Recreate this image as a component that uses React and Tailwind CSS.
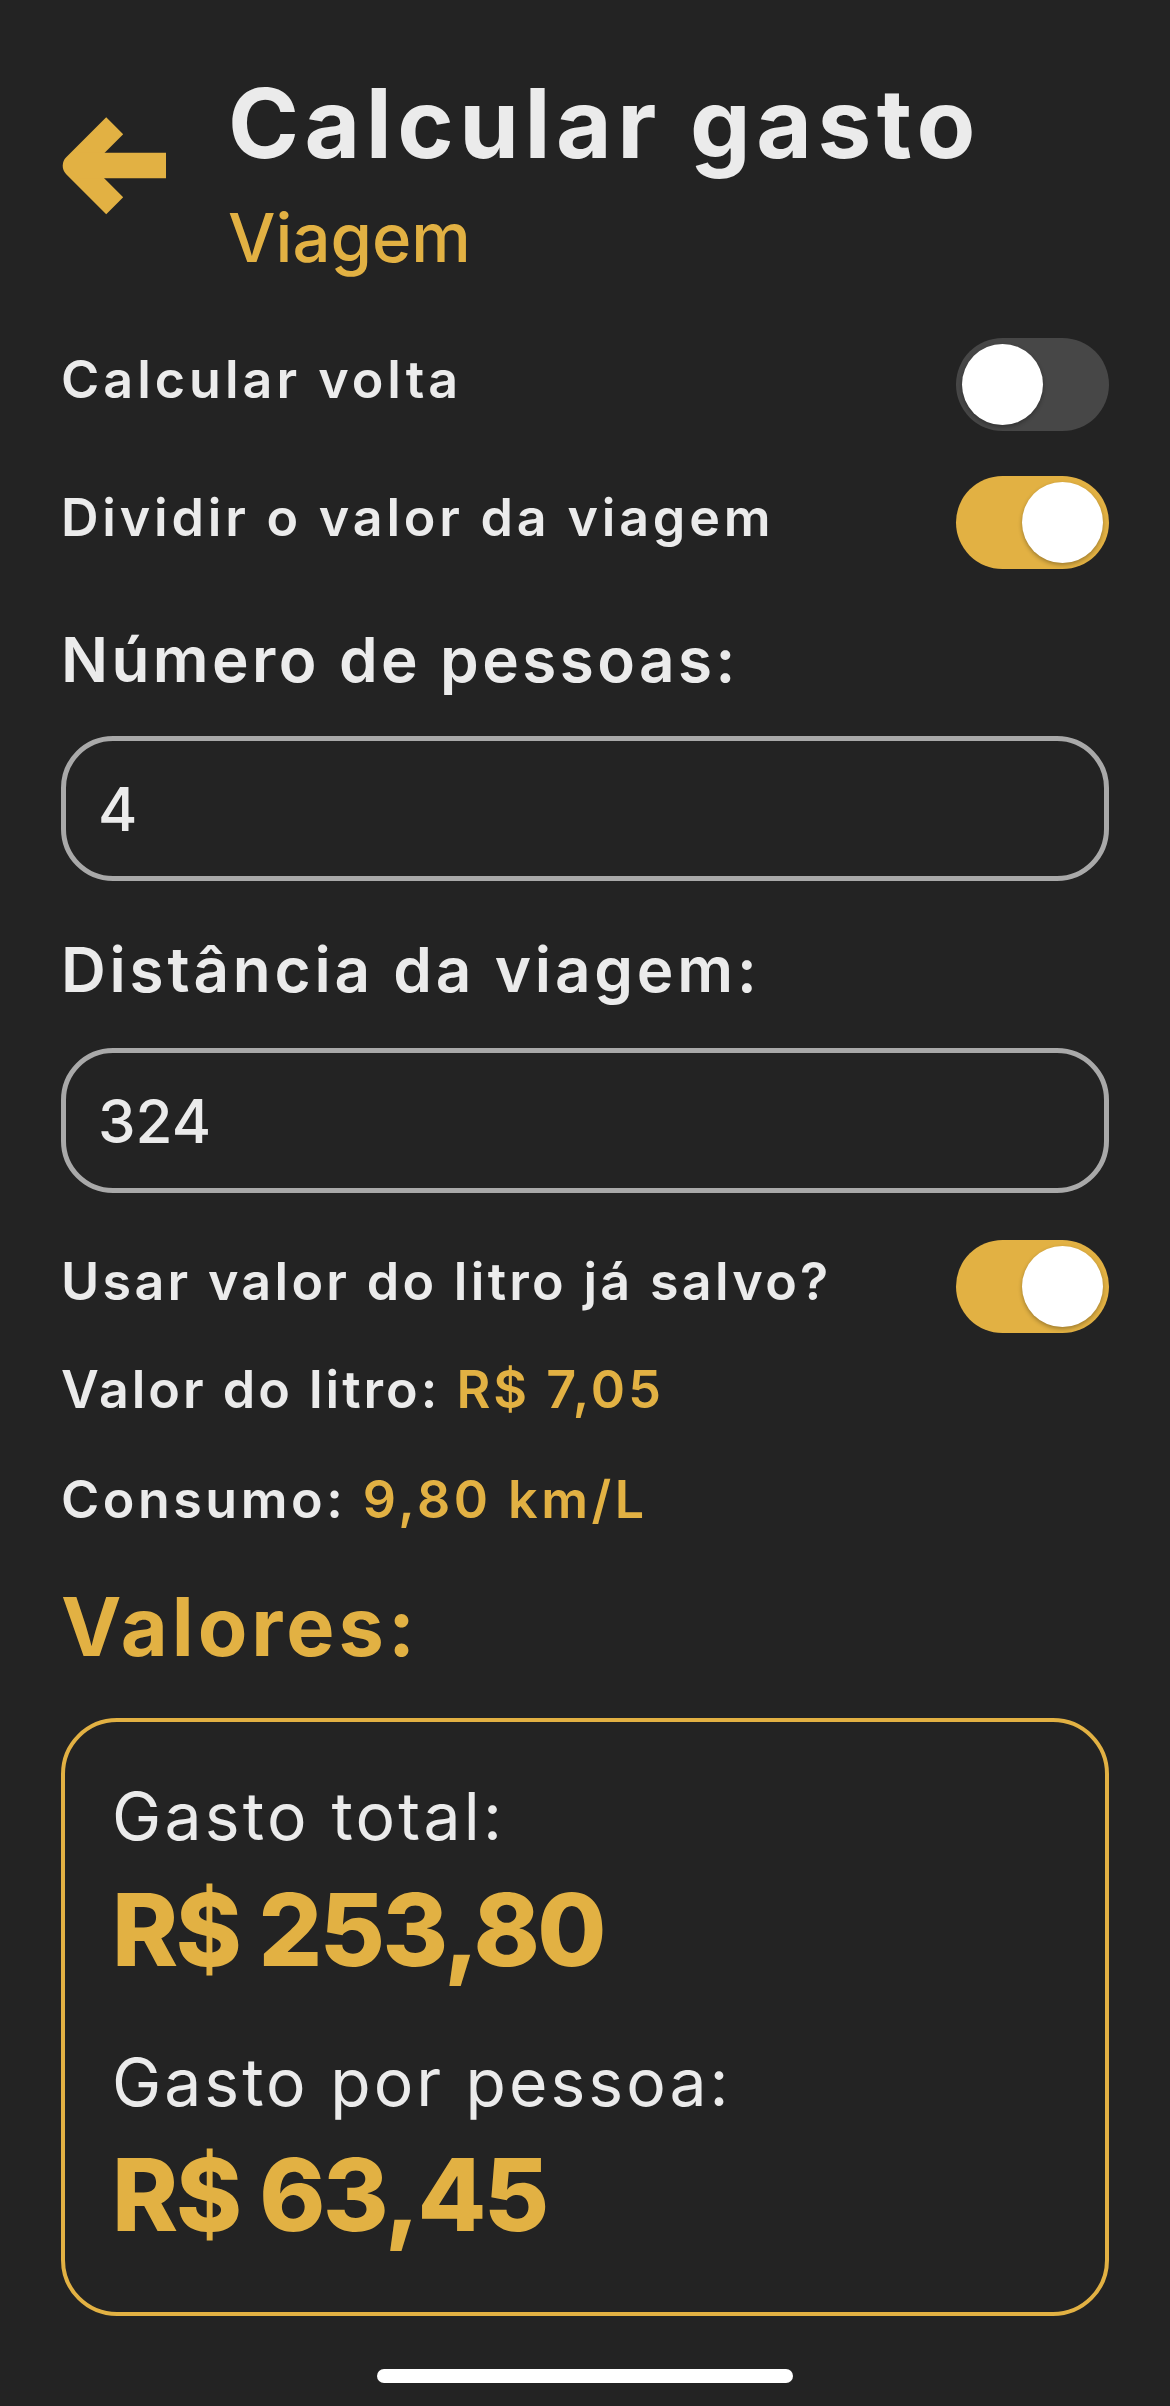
import React, { useState } from "react";

const FONT = { fontFamily: "Inter, 'Noto Sans', sans-serif" };

// ==================== TOGGLE ====================
function Toggle({ on, onChange }) {
  return (
    <button
      onClick={() => onChange(!on)}
      className={`flex h-[93px] w-[153px] shrink-0 items-center rounded-full p-[6px] ${
        on ? "justify-end bg-[#e2b143]" : "justify-start bg-[#474747]"
      }`}
    >
      <span className="block h-[81px] w-[81px] rounded-full bg-white shadow-[0_2px_4px_rgba(0,0,0,0.3)]" />
    </button>
  );
}

// ==================== BACK ARROW ====================
function BackArrow() {
  return (
    <svg width="110" height="102" viewBox="58 115 110 102" className="shrink-0">
      <path
        d="M114.7 125.8 L74.7 165.8 L114.7 205.8"
        fill="none"
        stroke="#e2b143"
        strokeWidth="24"
        strokeLinejoin="round"
      />
      <path d="M78 165.6 L166 165.6" stroke="#e2b143" strokeWidth="25.5" />
    </svg>
  );
}

export default function App() {
  const [volta, setVolta] = useState(false);
  const [dividir, setDividir] = useState(true);
  const [salvo, setSalvo] = useState(true);
  const [pessoas, setPessoas] = useState("4");
  const [distancia, setDistancia] = useState("324");

  return (
    <div
      style={FONT}
      className="min-h-[2406px] w-[1170px] bg-[#232323] px-[61px] pt-[75px] text-[#ebebeb]"
    >
      {/* HEADER */}
      <div className="flex items-start">
        <div className="mt-[40px] -ml-[3px]">
          <BackArrow />
        </div>
        <div className="ml-[60px] flex flex-col">
          <h1 className="text-[96px] font-bold leading-none tracking-[5.5px]">
            Calcular gasto
          </h1>
          <p className="mt-[33px] text-[67px] font-medium leading-none text-[#e2b143]">
            Viagem
          </p>
        </div>
      </div>

      {/* SWITCHES */}
      <div className="mt-[67px] flex items-center justify-between">
        <span className="mb-[10px] text-[52px] font-semibold leading-none tracking-[4px]">
          Calcular volta
        </span>
        <Toggle on={volta} onChange={setVolta} />
      </div>
      <div className="mt-[45px] flex items-center justify-between">
        <span className="mb-[10px] text-[52px] font-semibold leading-none tracking-[3.8px]">
          Dividir o valor da viagem
        </span>
        <Toggle on={dividir} onChange={setDividir} />
      </div>

      {/* INPUTS */}
      <p className="mt-[60px] text-[62px] font-semibold leading-none tracking-[3.4px]">
        Número de pessoas:
      </p>
      <input
        value={pessoas}
        onChange={(e) => setPessoas(e.target.value)}
        className="mt-[45px] block h-[145px] w-full rounded-[52px] border-[5px] border-[#a9a9a9] bg-transparent px-[32px] text-[60px] font-medium text-[#ebebeb] outline-none"
      />
      <p className="mt-[58px] text-[62px] font-semibold leading-none tracking-[3.8px]">
        Distância da viagem:
      </p>
      <input
        value={distancia}
        onChange={(e) => setDistancia(e.target.value)}
        className="mt-[47px] block h-[145px] w-full rounded-[52px] border-[5px] border-[#a9a9a9] bg-transparent px-[32px] text-[60px] font-medium text-[#ebebeb] outline-none"
      />

      <div className="mt-[47px] flex items-center justify-between">
        <span className="mb-[10px] text-[52px] font-semibold leading-none tracking-[3.3px]">
          Usar valor do litro já salvo?
        </span>
        <Toggle on={salvo} onChange={setSalvo} />
      </div>

      <p className="mt-[31px] text-[52px] font-semibold leading-none tracking-[3px]">
        Valor do litro: <span className="text-[#e2b143]">R$ 7,05</span>
      </p>
      <p className="mt-[58px] text-[52px] font-semibold leading-none tracking-[3.5px]">
        Consumo: <span className="text-[#e2b143]">9,80 km/L</span>
      </p>

      {/* RESULTS */}
      <h2 className="mt-[61px] text-[81px] font-bold leading-none tracking-[4px] text-[#e2b143]">
        Valores:
      </h2>
      <div className="mt-[50px] h-[598px] rounded-[56px] border-[4px] border-[#e2b143] px-[47px] pt-[61px]">
        <p className="text-[66px] leading-none tracking-[3.2px]">Gasto total:</p>
        <p className="mt-[31px] text-[100px] font-extrabold leading-none tracking-[-2.5px] text-[#e2b143]">
          R$ 253,80
        </p>
        <p className="mt-[69px] text-[66px] leading-none tracking-[3px]">
          Gasto por pessoa:
        </p>
        <p className="mt-[30px] text-[100px] font-extrabold leading-none tracking-[-2.3px] text-[#e2b143]">
          R$ 63,45
        </p>
      </div>

      {/* HOME INDICATOR */}
      <div className="mt-[53px] flex justify-center">
        <div className="h-[14px] w-[416px] rounded-full bg-white" />
      </div>
    </div>
  );
}
